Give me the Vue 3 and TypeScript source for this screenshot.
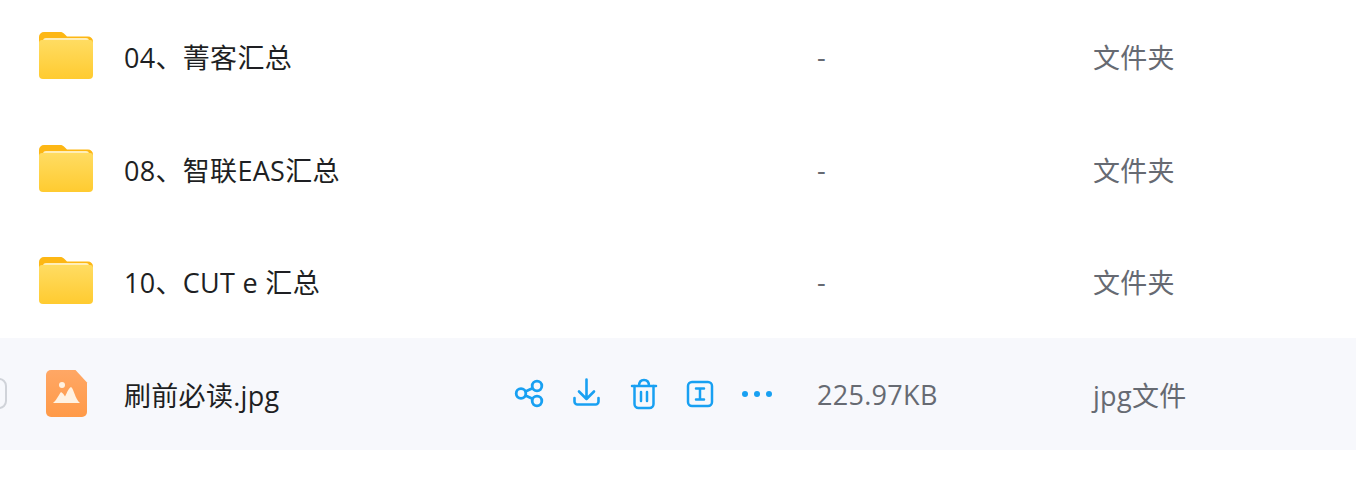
<script setup lang="ts">
interface Row { name: string; size: string; type: string; kind: 'folder' | 'image'; active?: boolean }
const rows: Row[] = [
  { name: '04、菁客汇总', size: '-', type: '文件夹', kind: 'folder' },
  { name: '08、智联EAS汇总', size: '-', type: '文件夹', kind: 'folder' },
  { name: '10、CUT e 汇总', size: '-', type: '文件夹', kind: 'folder' },
  { name: '刷前必读.jpg', size: '225.97KB', type: 'jpg文件', kind: 'image', active: true },
]
</script>

<template>
  <div class="list">
    <div v-for="r in rows" :key="r.name" class="row" :class="{ active: r.active }">
      <div class="check"><span v-if="r.active" class="box"></span></div>
      <div class="icon">
        <svg v-if="r.kind === 'folder'" class="folder" width="56" height="50" viewBox="0 0 56 50">
          <defs>
            <linearGradient id="front" x1="0" y1="0" x2="0" y2="1">
              <stop offset="0" stop-color="#ffdc62" />
              <stop offset="1" stop-color="#ffcb30" />
            </linearGradient>
          </defs>
          <path d="M1 6a5 5 0 0 1 5-5h16c2 0 3 .6 4.200 1.800L29 5.500h21a5 5 0 0 1 5 5V23H1z" fill="#fdb714" />
          <rect x="5" y="7" width="46" height="10" rx="3" fill="#ffeeb8" />
          <path d="M1 12a3 3 0 0 1 3-3h48a3 3 0 0 1 3 3v32a4 4 0 0 1-4 4H5a4 4 0 0 1-4-4z" fill="url(#front)" />
        </svg>
        <svg v-else class="image" width="42" height="48" viewBox="0 0 42 48">
          <defs>
            <linearGradient id="img" x1="0" y1="0" x2="0" y2="1">
              <stop offset="0" stop-color="#ffa765" />
              <stop offset="1" stop-color="#ff9a48" />
            </linearGradient>
          </defs>
          <path d="M5 0h24.500L41 12.500V42a5 5 0 0 1-5 5H5a5 5 0 0 1-5-5V5a5 5 0 0 1 5-5z" fill="url(#img)" />
          <circle cx="16" cy="15" r="3" fill="#fff2e2" />
          <path d="M7 33c3-2 5-7 8-11 2 1 3 3 4 4.500 2-4 4-9 6-9.500 3 2 4 12 9 16z" fill="#fff2e2" />
        </svg>
      </div>
      <div class="name">{{ r.name }}</div>
      <div class="actions">
        <template v-if="r.active">
          <svg class="act" width="30" height="30" viewBox="0 0 30 30" fill="none" stroke="#18a0f2" stroke-width="2.800">
            <circle cx="7" cy="14.500" r="4.800" />
            <circle cx="23" cy="7" r="4.800" />
            <circle cx="23" cy="22" r="4.800" />
            <path d="M11.500 12.500l7.500-3.500M11.500 16.500l7.500 3.500" />
          </svg>
          <svg class="act" width="30" height="32" viewBox="0 0 30 32" fill="none" stroke="#18a0f2" stroke-width="2.600" stroke-linecap="round" stroke-linejoin="round">
            <path d="M14.500 1.500V21M7 13.500l7.500 7.500 7.500-7.500" />
            <path d="M2.500 20v3.500a3 3 0 0 0 3 3h18a3 3 0 0 0 3-3V20" />
          </svg>
          <svg class="act" width="28" height="32" viewBox="0 0 28 32" fill="none" stroke="#18a0f2" stroke-width="2.500" stroke-linecap="round" stroke-linejoin="round">
            <path d="M2 8h24M9 8c0-4 2-6 5-6s5 2 5 6" />
            <path d="M4.500 8v18a4 4 0 0 0 4 4h11a4 4 0 0 0 4-4V8" />
            <path d="M11 14v9M17 14v9" />
          </svg>
          <svg class="act" width="28" height="28" viewBox="0 0 28 28" fill="none" stroke="#18a0f2" stroke-width="2.500" stroke-linecap="round">
            <rect x="2" y="2" width="24" height="24" rx="4" />
            <path d="M10 8.500h8M10 19.500h8M14 8.500v11" />
          </svg>
          <svg class="act" width="30" height="8" viewBox="0 0 30 8" fill="#18a0f2">
            <circle cx="3" cy="4" r="3" />
            <circle cx="15" cy="4" r="3" />
            <circle cx="27" cy="4" r="3" />
          </svg>
        </template>
      </div>
      <div class="size">{{ r.size }}</div>
      <div class="type">{{ r.type }}</div>
    </div>
  </div>
</template>

<style>
html, body { margin: 0; background: #fff; }
</style>

<style scoped>
.list {
  width: 1356px;
  height: 480px;
  overflow: hidden;
  font-family: "Open Sans", "Noto Sans CJK SC", sans-serif;
}
.row {
  height: 112.500px;
  display: flex;
  align-items: center;
  font-size: 27px;
  letter-spacing: 0.3px;
  color: #666a72;
}
.row.active { background: #f7f8fc; }
.check { width: 38px; flex: none; position: relative; height: 32px; }
.box {
  position: absolute;
  left: -25px;
  top: 0;
  width: 32px;
  height: 31px;
  box-sizing: border-box;
  border: 2px solid #d0d3d9;
  border-radius: 8px;
}
.icon { width: 56px; flex: none; display: flex; justify-content: center; }
.image { transform: translateX(1px); }
.name { width: 390px; margin-left: 30px; padding-top: 1px; flex: none; color: #1e1f23; }
.actions {
  width: 303px;
  flex: none;
  display: flex;
  align-items: center;
  gap: 28px;
}
.size { width: 276px; padding-top: 1px; flex: none; }
.type { flex: 1; padding-top: 1px; }
</style>
